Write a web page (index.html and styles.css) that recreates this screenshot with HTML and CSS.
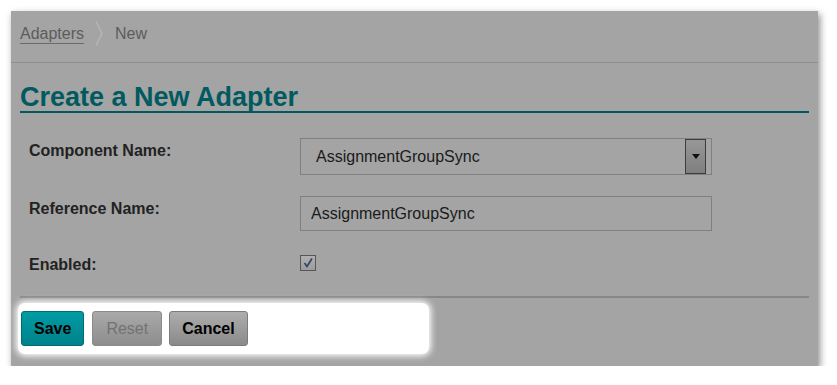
FILE: index.html
```html
<!DOCTYPE html>
<html lang="en">
<head>
  <meta charset="UTF-8" />
  <meta name="viewport" content="width=device-width, initial-scale=1.0" />
  <title>Create a New Adapter</title>
  <link rel="stylesheet" href="styles.css">
</head>
<body>
  <div class="panel">
    <nav class="breadcrumb">
      <a href="#adapters">Adapters</a>
      <svg class="crumb-sep" width="8" height="25" viewBox="0 0 8 25">
        <polyline points="1,0.5 7,12.5 1,24.5" fill="none" stroke="#b9b9b9" stroke-width="1.2" />
      </svg>
      <span>New</span>
    </nav>

    <h1>Create a New Adapter</h1>

    <form class="adapter-form">
      <div class="form-grid">
        <label class="field-label">Component Name:</label>
        <div class="select">
          <span class="select-value">AssignmentGroupSync</span>
          <span class="select-btn">
            <svg width="8" height="5" viewBox="0 0 8 5"><polygon points="0,0 8,0 4,5" fill="#111" /></svg>
          </span>
        </div>

        <label class="field-label" for="refName">Reference Name:</label>
        <input type="text" id="refName" class="text-input" value="AssignmentGroupSync" />

        <label class="field-label">Enabled:</label>
        <span class="checkbox">
          <svg width="12" height="12" viewBox="0 0 12 12">
            <polyline points="2.5,6 5,9.5 10,1.5" fill="none" stroke="#34446c" stroke-width="1.7" />
          </svg>
        </span>
      </div>

      <div class="divider"></div>

      <div class="actions">
        <button type="button" class="btn btn-save">Save</button>
        <button type="button" class="btn btn-reset">Reset</button>
        <button type="button" class="btn btn-cancel">Cancel</button>
      </div>
    </form>
  </div>
</body>
</html>
```

FILE: styles.css
```css
body {
  margin: 0;
  padding: 11px 0 0 11px;
  background: #fff;
  font-family: "Liberation Sans", Arial, sans-serif;
  color: #222;
}
.panel {
  width: 807px;
  background: #a4a4a4;
  padding-bottom: 12px;
  box-shadow: 2px 3px 7px rgba(0,0,0,0.45);
}
.breadcrumb {
  display: flex;
  align-items: center;
  padding: 14px 9px 19px;
  line-height: 18px;
  font-size: 16px;
  border-bottom: 1px solid #8f8f8f;
  color: #5c5c5c;
}
.breadcrumb a {
  color: #5c5c5c;
  text-decoration: underline;
  text-decoration-color: #6a6a6a;
  text-underline-offset: 4px;
}
.crumb-sep {
  margin: -4px 12px -3px 11px;
}
h1 {
  margin: 21px 9px 0;
  font-size: 27px;
  line-height: 27px;
  font-weight: bold;
  color: #005a60;
  border-bottom: 2px solid #005a60;
}
.form-grid {
  display: grid;
  grid-template-columns: 271px 412px;
  grid-template-rows: 58px 59px 41px;
  align-items: start;
  padding: 25px 0 0 18px;
}
.field-label {
  font-size: 16px;
  font-weight: bold;
  padding-top: 4px;
  color: #222;
}
.field-label:last-of-type {
  padding-top: 1px;
}
.select {
  display: flex;
  align-items: center;
  justify-content: space-between;
  height: 37px;
  box-sizing: border-box;
  border: 1px solid #808080;
  padding: 0 5px 0 15px;
  font-size: 16px;
  color: #1a1a1a;
}
.select-btn {
  display: flex;
  align-items: center;
  justify-content: center;
  width: 19px;
  height: 33px;
  border: 1px solid #3c3c3c;
  background: linear-gradient(#979797, #7f7f7f);
}
.text-input {
  height: 35px;
  box-sizing: border-box;
  border: 1px solid #808080;
  background: #a4a4a4;
  padding: 0 10px;
  margin: 0;
  font-family: inherit;
  font-size: 16px;
  color: #1a1a1a;
  outline: none;
}
.checkbox {
  display: flex;
  align-items: center;
  justify-content: center;
  width: 16px;
  height: 16px;
  box-sizing: border-box;
  border: 1px solid #565656;
  background: linear-gradient(#b0b0b0, #9c9c9c);
}
.divider {
  margin: 0 9px;
  border-top: 2px solid #878787;
}
.actions {
  display: flex;
  gap: 7px;
  width: 405px;
  margin: 5px 0 0 7px;
  padding: 8px 3px;
  background: #fff;
  border-radius: 7px;
  box-shadow: 0 0 6px 2px #fff;
}
.btn {
  height: 35px;
  padding: 0 13px;
  border-radius: 3px;
  font-family: inherit;
  font-size: 16px;
  cursor: pointer;
}
.btn-save {
  background: linear-gradient(#009ba4, #00828a);
  border: 1px solid #006d74;
  color: #000;
  font-weight: bold;
  padding: 0 12px;
  margin-right: 1px;
}
.btn-reset {
  background: linear-gradient(#a9a9a9, #8d8d8d);
  border: 1px solid #8a8a8a;
  color: #727272;
}
.btn-cancel {
  background: linear-gradient(#adadad, #8a8a8a);
  border: 1px solid #7c7c7c;
  color: #000;
  font-weight: bold;
  padding: 0 12px;
}
```
